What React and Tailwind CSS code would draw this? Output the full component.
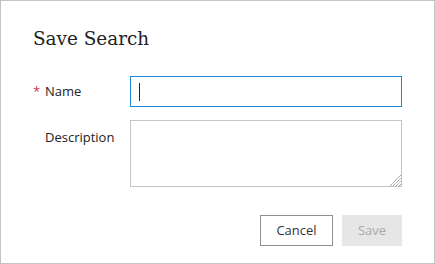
export default function App() {
  return (
    <div className="w-[435px] h-[264px] box-border border border-[#c3c3c3] bg-white px-[32px] flex flex-col">
      <div className="mt-[26px] h-[24px] leading-[24px] text-[18.4px] text-[#222] font-['DejaVu_Serif',serif]">
        Save Search
      </div>
      <div className="mt-[25px] flex flex-col gap-[13px] font-['Open_Sans',sans-serif] text-[13px] text-[#222]">
        <div className="flex items-center">
          <div className="w-[97px] flex items-center">
            <span className="w-[12px] text-[#d9304f] text-[13px] leading-none">*</span>
            <span>Name</span>
          </div>
          <div className="relative w-[272px] h-[31px] box-border border border-[#1a8ad4] bg-white">
            <div className="absolute left-[8px] top-[6px] w-[1px] h-[18px] bg-[#222]" />
          </div>
        </div>
        <div className="flex items-start">
          <div className="w-[97px] flex pt-[8px]">
            <span className="w-[12px]"></span>
            <span>Description</span>
          </div>
          <div className="relative w-[272px] h-[67px]">
            <textarea className="w-full h-full box-border border border-[#c3c3c3] bg-white outline-none resize-none block" />
            <svg className="absolute right-[1px] bottom-[1px]" width="12" height="12" viewBox="0 0 12 12">
              <g stroke="#8a8a8a" strokeWidth="1" strokeDasharray="1.2 0.6">
                <line x1="1" y1="12" x2="12" y2="1" />
                <line x1="4" y1="12" x2="12" y2="4" />
                <line x1="7" y1="12" x2="12" y2="7" />
                <line x1="10" y1="12" x2="12" y2="10" />
              </g>
            </svg>
          </div>
        </div>
      </div>
      <div className="mt-[28px] flex justify-end gap-[9px] font-['Open_Sans',sans-serif] text-[13px]">
        <button className="w-[73px] h-[31px] box-border border border-[#8f8f8f] bg-white text-[#333]">Cancel</button>
        <button className="w-[60px] h-[31px] bg-[#e6e6e6] text-[#a8a8a8]">Save</button>
      </div>
    </div>
  );
}
